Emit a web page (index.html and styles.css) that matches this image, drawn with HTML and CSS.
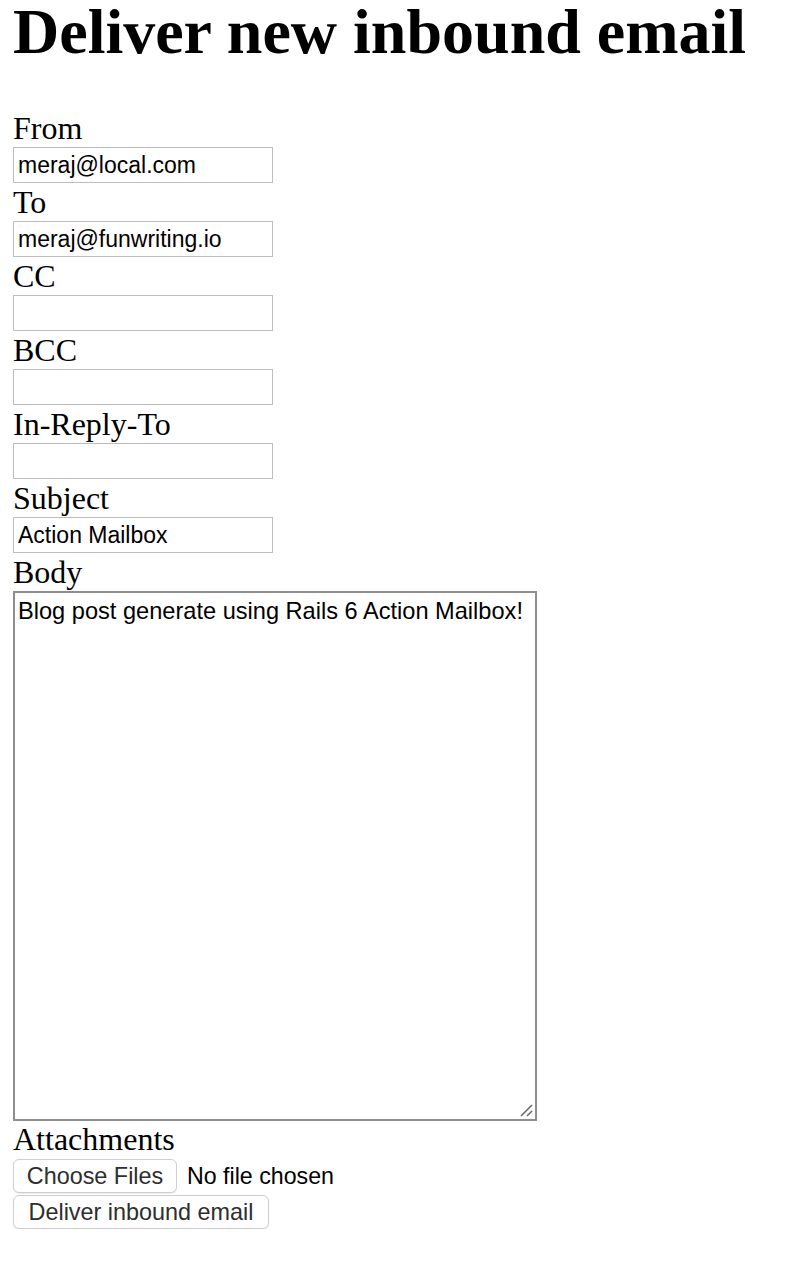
FILE: index.html
```html
<!DOCTYPE html>
<html>
<head>
<meta charset="utf-8">
<title>Deliver new inbound email</title>
<link rel="stylesheet" href="styles.css">
</head>
<body>
<h1 class="title">Deliver new inbound email</h1>
<form class="form">
  <div class="field">
    <label class="label">From</label>
    <div class="input">meraj@local.com</div>
  </div>
  <div class="field">
    <label class="label">To</label>
    <div class="input">meraj@funwriting.io</div>
  </div>
  <div class="field">
    <label class="label">CC</label>
    <div class="input"></div>
  </div>
  <div class="field">
    <label class="label">BCC</label>
    <div class="input"></div>
  </div>
  <div class="field">
    <label class="label">In-Reply-To</label>
    <div class="input"></div>
  </div>
  <div class="field">
    <label class="label">Subject</label>
    <div class="input">Action Mailbox</div>
  </div>
  <div class="field field-body">
    <label class="label">Body</label>
    <div class="textarea">Blog post generate using Rails 6 Action Mailbox!
      <svg class="grip" width="16" height="16" viewBox="0 0 16 16">
        <line x1="3" y1="14" x2="14" y2="3" stroke="#6a6a6a" stroke-width="1.6"/>
        <line x1="9" y1="14" x2="14" y2="9" stroke="#6a6a6a" stroke-width="1.6"/>
      </svg>
    </div>
  </div>
  <div class="field field-attach">
    <label class="label">Attachments</label>
    <div class="file-row">
      <span class="btn btn-file">Choose Files</span>
      <span class="file-status">No file chosen</span>
    </div>
  </div>
  <div class="submit-row">
    <span class="btn btn-submit">Deliver inbound email</span>
  </div>
</form>
</body>
</html>
```
FILE: styles.css
```css
html, body {
  margin: 0;
  padding: 0;
  background: #ffffff;
}
body {
  padding-left: 13px;
  color: #000;
  font-family: "Liberation Serif", "Times New Roman", serif;
}
.title {
  margin: 0;
  font-size: 64px;
  line-height: 64px;
  font-weight: bold;
  white-space: nowrap;
}
.form {
  margin-top: 46px;
  display: flex;
  flex-direction: column;
}
.field {
  display: flex;
  flex-direction: column;
  align-items: flex-start;
  margin-bottom: 1px;
}
.label {
  font-size: 32px;
  line-height: 37px;
  height: 37px;
}
.input {
  box-sizing: border-box;
  width: 260px;
  height: 36px;
  border: 1px solid #bdbdbd;
  padding: 0 4px;
  font-family: "Liberation Sans", Arial, sans-serif;
  font-size: 23px;
  line-height: 35px;
  color: #000;
  white-space: nowrap;
  overflow: hidden;
}
.field-body {
  margin-bottom: 0;
}
.textarea {
  position: relative;
  box-sizing: border-box;
  width: 524px;
  height: 530px;
  border: 2px solid #8e8e8e;
  padding: 3px 3px;
  font-family: "Liberation Sans", Arial, sans-serif;
  font-size: 23.6px;
  line-height: 30px;
  color: #000;
}
.grip {
  position: absolute;
  right: 1px;
  bottom: 1px;
}
.field-attach {
  margin-bottom: 0;
}
.file-row {
  display: flex;
  align-items: center;
  gap: 10px;
  height: 34px;
  margin-top: 1px;
}
.btn {
  box-sizing: border-box;
  display: inline-flex;
  align-items: center;
  justify-content: center;
  height: 34px;
  border: 1px solid #cfcfcf;
  border-radius: 6px;
  background: #ffffff;
  box-shadow: 0 1px 1px rgba(0, 0, 0, 0.08);
  font-family: "Liberation Sans", Arial, sans-serif;
  font-size: 23.4px;
  color: #2e2e2e;
  white-space: nowrap;
}
.btn-file {
  width: 164px;
}
.file-status {
  font-family: "Liberation Sans", Arial, sans-serif;
  font-size: 23.2px;
  color: #000;
}
.submit-row {
  margin-top: 2px;
  display: flex;
}
.btn-submit {
  width: 256px;
}
```
